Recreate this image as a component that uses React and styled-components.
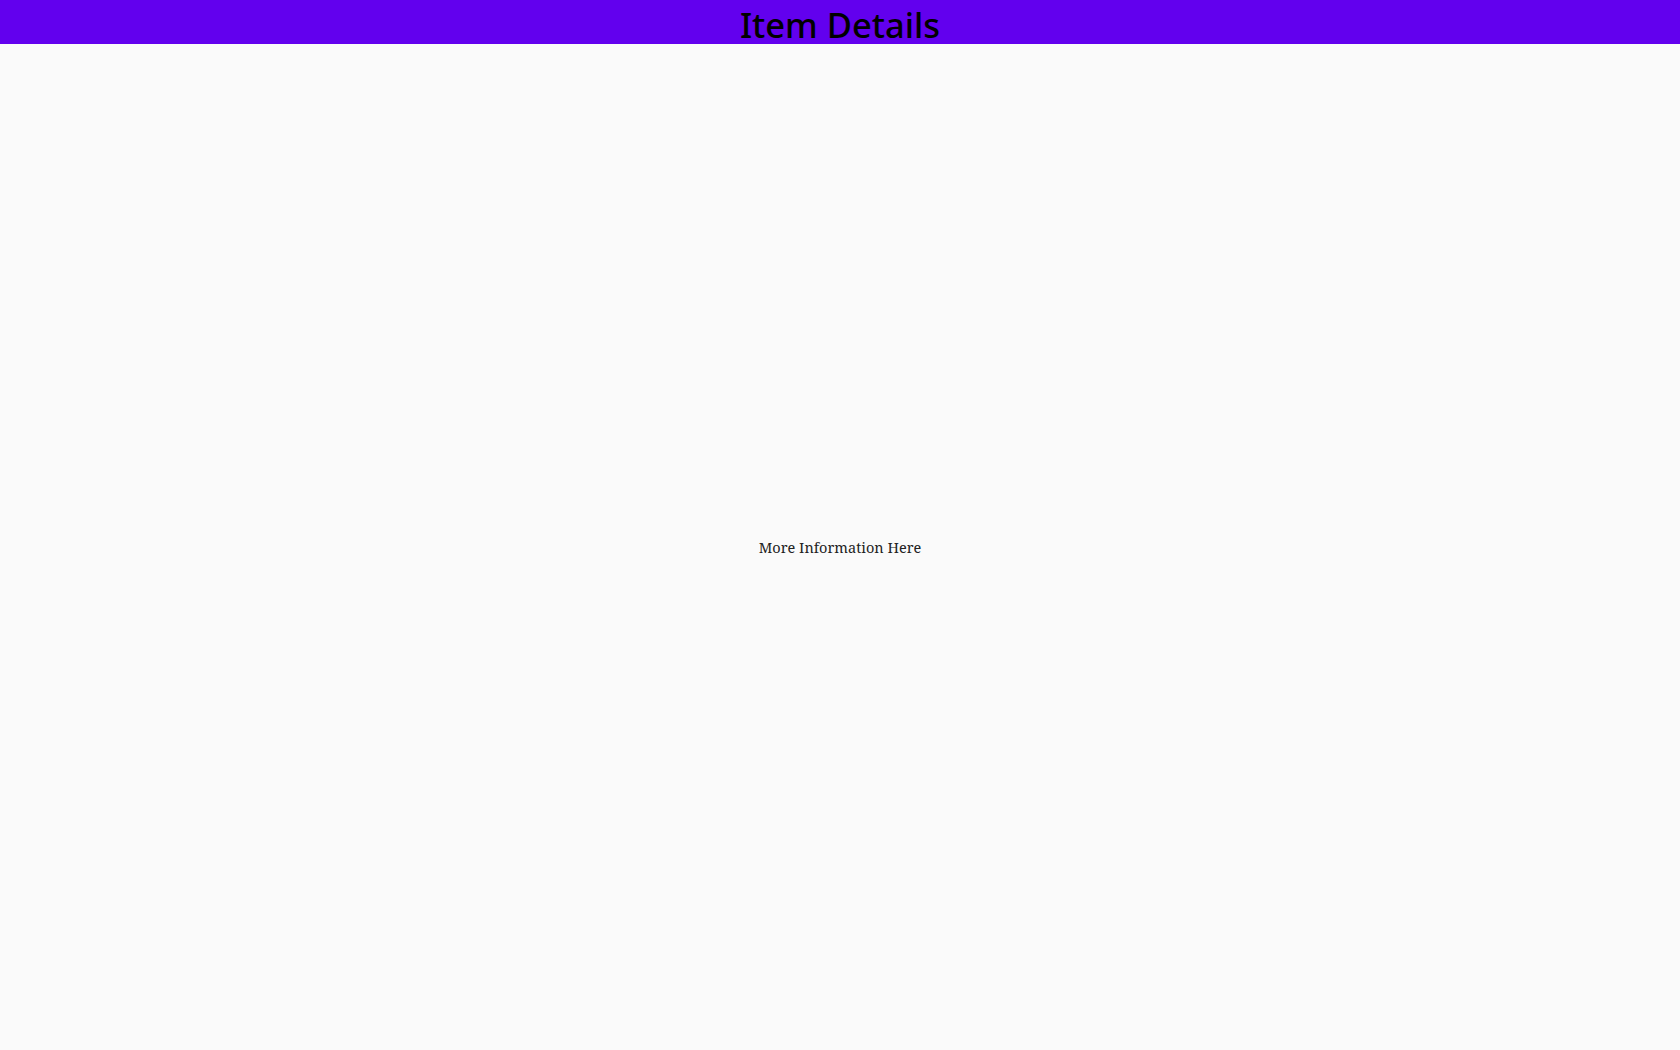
import styled, { createGlobalStyle } from 'styled-components';

const GlobalStyle = createGlobalStyle`
  html, body {
    margin: 0;
    padding: 0;
    background: #fafafa;
  }
`;

const Page = styled.div`
  display: flex;
  flex-direction: column;
  height: 100vh;
`;

const Toolbar = styled.header`
  height: 44px;
  background: #6200ee;
  display: flex;
  justify-content: center;
  overflow: visible;
`;

const Title = styled.h1`
  margin: 0;
  font-family: 'Noto Sans', sans-serif;
  font-weight: 500;
  font-size: 34.5px;
  line-height: 50px;
  color: #000;
`;

const Main = styled.main`
  flex: 1;
  display: flex;
  align-items: center;
  justify-content: center;
`;

const Info = styled.p`
  margin: 0;
  font-family: 'Noto Serif', 'DejaVu Serif', serif;
  font-size: 14.5px;
  color: #222;
`;

export default function App() {
  return (
    <>
      <GlobalStyle />
      <Page>
        <Toolbar>
          <Title>Item Details</Title>
        </Toolbar>
        <Main>
          <Info>More Information Here</Info>
        </Main>
      </Page>
    </>
  );
}
